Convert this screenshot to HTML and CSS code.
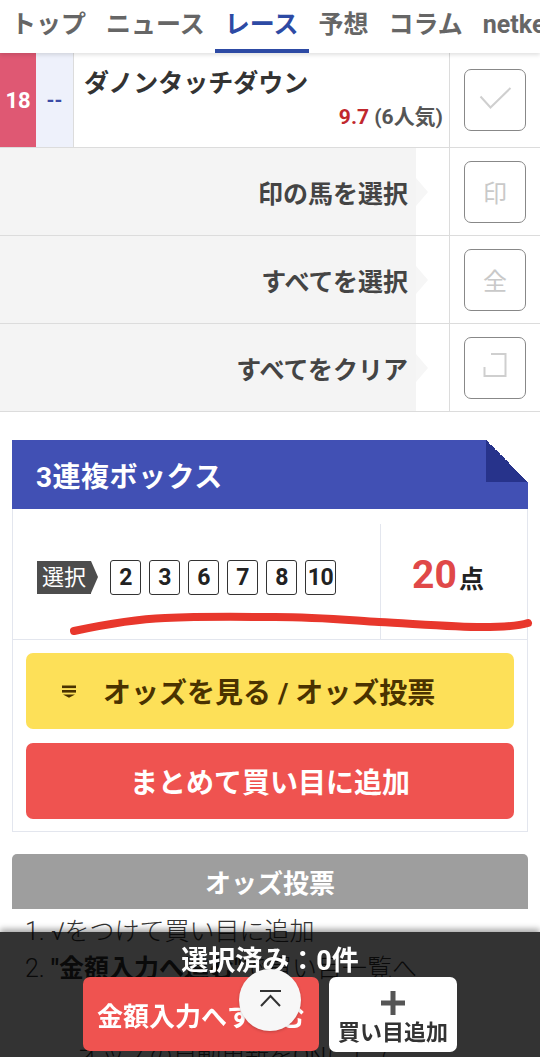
FILE: index.html
```html
<!DOCTYPE html>
<html lang="ja">
<head>
<meta charset="utf-8">
<title>3連複ボックス</title>
<link rel="stylesheet" href="styles.css">
</head>
<body>
<nav class="tabs">
  <a class="tab">トップ</a>
  <a class="tab">ニュース</a>
  <a class="tab is-active">レース</a>
  <a class="tab">予想</a>
  <a class="tab">コラム</a>
  <a class="tab">netkeiba</a>
</nav>

<section class="horse-row">
  <div class="waku">18</div>
  <div class="mark">--</div>
  <div class="horse-info">
    <div class="horse-name">ダノンタッチダウン</div>
    <div class="horse-odds"><span class="odds">9.7</span> (6人気)</div>
  </div>
  <div class="check-cell">
    <span class="check-box">
      <svg width="62" height="62" viewBox="0 0 62 62"><path d="M16.5 27.5 L26.5 38.5 L46.5 19" fill="none" stroke="#cfcfcf" stroke-width="2"/></svg>
    </span>
  </div>
</section>

<div class="action-row">
  <div class="action-label">印の馬を選択</div>
  <div class="action-arrow"></div>
  <div class="action-gap"></div>
  <div class="check-cell"><span class="check-box glyph">印</span></div>
</div>
<div class="action-row">
  <div class="action-label">すべてを選択</div>
  <div class="action-arrow"></div>
  <div class="action-gap"></div>
  <div class="check-cell"><span class="check-box glyph">全</span></div>
</div>
<div class="action-row">
  <div class="action-label">すべてをクリア</div>
  <div class="action-arrow"></div>
  <div class="action-gap"></div>
  <div class="check-cell">
    <span class="check-box">
      <svg width="62" height="62" viewBox="0 0 62 62"><path d="M27 17 H41.5 V39 H20.5 V30" fill="none" stroke="#cfcfcf" stroke-width="2"/></svg>
    </span>
  </div>
</div>

<section class="box">
  <h2 class="box-head">3連複ボックス</h2>
  <div class="box-body">
    <div class="sel-row">
      <div class="sel-left">
        <span class="sel-tag">選択</span>
        <ul class="nums">
          <li>2</li><li>3</li><li>6</li><li>7</li><li>8</li><li>10</li>
        </ul>
      </div>
      <div class="sel-right"><span class="points">20</span><span class="pt-unit">点</span></div>
    </div>
    <div class="box-buttons">
      <button class="btn btn-yellow">
        <svg class="list-icon" width="16" height="13" viewBox="0 0 16 13"><rect x="1" y="0.5" width="14" height="2.6" fill="#4a3200"/><rect x="1" y="5" width="14" height="2.6" fill="#4a3200"/><path d="M2 9.4 H14 L8 12.8 Z" fill="#4a3200"/></svg>
        <span>オッズを見る / オッズ投票</span>
      </button>
      <button class="btn btn-red">まとめて買い目に追加</button>
    </div>
  </div>
  <svg class="scribble" width="480" height="30" viewBox="0 0 480 30"><path d="M7 21 C40 14 70 9 98 8 C140 6 180 7 208 7 C250 7 280 10 312 12 C350 14 390 17 415 17 C440 17 455 15 461 13" fill="none" stroke="#e8372c" stroke-width="8" stroke-linecap="round"/></svg>
</section>

<section class="vote">
  <h3 class="vote-head">オッズ投票</h3>
  <ol class="vote-steps">
    <li>1. √をつけて買い目に追加</li>
    <li>2. <b>"金額入力へ進む"</b>で買い目一覧へ</li>
  </ol>
  <p class="vote-note">オッズの自動更新をONにして</p>
</section>

<div class="bottom-bar">
  <div class="bar-count">選択済み：0件</div>
  <div class="bar-buttons">
    <button class="bar-next">金額入力へすすむ</button>
    <button class="bar-add">
      <svg width="26" height="26" viewBox="0 0 26 26"><path d="M13 1 V25 M1 13 H25" stroke="#555" stroke-width="5"/></svg>
      <span>買い目追加</span>
    </button>
  </div>
  <button class="to-top">
    <svg width="62" height="62" viewBox="0 0 62 62"><path d="M21 22 H42 M22 37 L31.5 27 L41 37" fill="none" stroke="#333" stroke-width="2"/></svg>
  </button>
</div>
</body>
</html>
```
FILE: styles.css
```css
* { box-sizing: border-box; }

body {
  margin: 0;
  width: 540px;
  background: #fff;
  color: #333;
  font-family: Roboto, "Noto Sans CJK JP", sans-serif;
}

/* tabs */
.tabs {
  display: flex;
  height: 53px;
  padding-left: 1px;
  overflow: hidden;
  white-space: nowrap;
  background: #fff;
  box-shadow: 0 2px 4px rgba(0,0,0,0.12);
  position: relative;
  z-index: 1;
}
.tab {
  display: block;
  flex: none;
  padding: 0 10px;
  line-height: 49px;
  border-bottom: 4px solid transparent;
  font-size: 25px;
  font-weight: 700;
  color: #666;
}
.tab.is-active {
  color: #2d4aa4;
  border-bottom-color: #2d4aa4;
}

/* horse row */
.horse-row {
  display: flex;
  height: 95px;
  border-bottom: 1px solid #dcdcdc;
}
.waku {
  width: 36px;
  background: #df5873;
  color: #fff;
  font-size: 22px;
  font-weight: 700;
  display: flex;
  align-items: center;
  justify-content: center;
}
.mark {
  width: 38px;
  background: #eef1fb;
  color: #3b4ba5;
  font-size: 20px;
  font-weight: 700;
  display: flex;
  align-items: center;
  justify-content: center;
  border-right: 1px solid #dcdcdc;
}
.horse-info {
  flex: 1;
  padding: 15px 6px 0 10px;
}
.horse-name {
  font-size: 25px;
  font-weight: 700;
  line-height: 32px;
  color: #333;
}
.horse-odds {
  margin-top: 3px;
  text-align: right;
  font-size: 21px;
  line-height: 28px;
  font-weight: 700;
  color: #555;
}
.odds { color: #c1272d; }

.check-cell {
  width: 91px;
  flex: none;
  border-left: 1px solid #dcdcdc;
  display: flex;
  align-items: center;
  justify-content: center;
  background: #fff;
}
.check-box {
  width: 62px;
  height: 62px;
  border: 1px solid #888;
  border-radius: 7px;
  display: flex;
  align-items: center;
  justify-content: center;
  overflow: hidden;
}
.check-box svg { flex: none; }
.check-box.glyph {
  color: #c9c9c9;
  font-size: 24px;
  font-weight: 400;
}

/* action rows */
.action-row {
  display: flex;
  height: 88px;
  border-bottom: 1px solid #dcdcdc;
}
.action-label {
  width: 416px;
  flex: none;
  background: #f4f4f4;
  display: flex;
  align-items: center;
  justify-content: flex-end;
  padding-right: 8px;
  font-size: 25px;
  font-weight: 700;
  color: #444;
}
.action-arrow {
  align-self: center;
  width: 0;
  height: 0;
  border-left: 12px solid #f6f6f6;
  border-top: 14px solid transparent;
  border-bottom: 14px solid transparent;
}
.action-gap { flex: 1; }

/* box */
.box {
  position: relative;
  margin: 28px 12px 0;
}
.box-head {
  position: relative;
  margin: 0;
  height: 69px;
  padding-left: 24px;
  display: flex;
  align-items: center;
  background: #4150b4;
  color: #fff;
  font-size: 28px;
  font-weight: 700;
  letter-spacing: 0.5px;
}
.box-head::after {
  content: "";
  position: absolute;
  top: 0;
  right: 0;
  width: 42px;
  height: 42px;
  background: linear-gradient(to bottom left, #fff 50%, #27338b 50%);
}
.box-body {
  border: 1px solid #e3e6ee;
  border-top: none;
}
.sel-row {
  display: flex;
  height: 131px;
  border-bottom: 1px solid #e3e6ee;
}
.sel-left {
  flex: 1;
  display: flex;
  align-items: center;
  padding: 6px 0 0 24px;
}
.sel-tag {
  position: relative;
  height: 33px;
  padding: 0 5px;
  background: #4d4d4d;
  color: #fff;
  font-size: 22px;
  line-height: 33px;
  margin-right: 19px;
}
.sel-tag::after {
  content: "";
  position: absolute;
  left: 100%;
  top: 0;
  border-left: 7px solid #4d4d4d;
  border-top: 16.5px solid transparent;
  border-bottom: 16.5px solid transparent;
}
.nums {
  display: flex;
  gap: 8px;
  margin: 0;
  padding: 0;
  list-style: none;
}
.nums li {
  width: 31px;
  height: 35px;
  border: 1.5px solid #333;
  border-radius: 3px;
  display: flex;
  align-items: center;
  justify-content: center;
  font-size: 23px;
  font-weight: 700;
  color: #222;
  letter-spacing: -0.5px;
}
.sel-right {
  width: 147px;
  flex: none;
  margin-top: 15px;
  border-left: 1px solid #e3e6ee;
  display: flex;
  align-items: baseline;
  justify-content: center;
  padding: 28px 12px 0 0;
}
.points {
  font-size: 39px;
  font-weight: 700;
  color: #e04848;
}
.pt-unit {
  margin-left: 2px;
  font-size: 25px;
  font-weight: 700;
  color: #222;
}
.box-buttons {
  display: flex;
  flex-direction: column;
  gap: 14px;
  padding: 13px 13px 12px;
}
.btn {
  height: 76px;
  border: none;
  border-radius: 7px;
  font-family: inherit;
  font-size: 28px;
  font-weight: 700;
  display: flex;
  align-items: center;
}
.btn-yellow {
  background: #fde058;
  color: #4a3200;
  padding-left: 35px;
  gap: 26px;
}
.btn-red {
  background: #ef5350;
  color: #fff;
  justify-content: center;
}
.scribble {
  position: absolute;
  left: 55px;
  top: 170px;
  overflow: visible;
}

/* vote */
.vote {
  margin: 22px 12px 0;
}
.vote-head {
  margin: 0;
  height: 55px;
  border-radius: 5px 5px 0 0;
  background: #9e9e9e;
  color: #fff;
  font-size: 26px;
  font-weight: 700;
  display: flex;
  align-items: center;
  justify-content: center;
}
.vote-steps {
  margin: 5px 0 0;
  padding: 0 0 0 13px;
  list-style: none;
  font-size: 25px;
  line-height: 36.5px;
  font-weight: 300;
  color: #333;
}
.vote-steps b { font-weight: 700; }
.vote-note {
  margin: 54px 0 0 65px;
  font-size: 24px;
  line-height: 30px;
  font-weight: 300;
  color: #333;
}

/* bottom bar */
.bottom-bar {
  position: fixed;
  left: 0;
  right: 0;
  bottom: 0;
  padding: 14px 0 5px;
  background: rgba(0,0,0,0.8);
  box-shadow: 0 -3px 6px rgba(0,0,0,0.35);
}
.bar-count {
  text-align: center;
  color: #fff;
  font-size: 27px;
  font-weight: 700;
  line-height: 30px;
}
.bar-buttons {
  display: flex;
  justify-content: center;
  gap: 10px;
  margin-top: 1px;
}
.bar-next {
  width: 236px;
  height: 74px;
  border: none;
  border-radius: 7px;
  background: #ef5350;
  color: #fff;
  font-family: inherit;
  font-size: 26px;
  font-weight: 700;
}
.bar-add {
  width: 128px;
  height: 75px;
  border: none;
  border-radius: 7px;
  background: #fff;
  color: #333;
  font-family: inherit;
  font-size: 22px;
  font-weight: 700;
  display: flex;
  flex-direction: column;
  align-items: center;
  justify-content: center;
  gap: 4px;
  padding: 6px 0 0;
}
.bar-add span { line-height: 26px; }
.to-top {
  position: absolute;
  left: 50%;
  top: 37px;
  width: 62px;
  height: 62px;
  margin-left: -31px;
  padding: 0;
  border: none;
  border-radius: 50%;
  background: #f7f7f7;
  box-shadow: 0 1px 3px rgba(0,0,0,0.2);
}
.to-top svg { display: block; }
```
